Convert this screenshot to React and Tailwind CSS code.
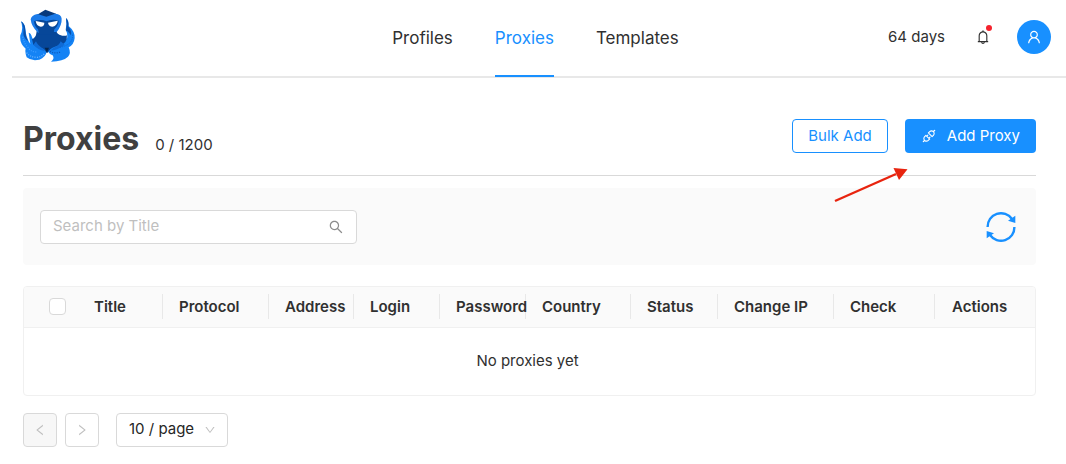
import {
  AiOutlineApi,
  AiOutlineBell,
  AiOutlineDown,
  AiOutlineLeft,
  AiOutlineRight,
  AiOutlineSearch,
  AiOutlineUser,
} from 'react-icons/ai';

const tabs = ['Profiles', 'Proxies', 'Templates'];

const columns = [
  { title: 'Title', width: 'w-[85px]' },
  { title: 'Protocol', width: 'w-[106px]' },
  { title: 'Address', width: 'w-[85px]' },
  { title: 'Login', width: 'w-[86px]' },
  { title: 'Password', width: 'w-[86px]' },
  { title: 'Country', width: 'w-[105px]' },
  { title: 'Status', width: 'w-[87px]' },
  { title: 'Change IP', width: 'w-[116px]' },
  { title: 'Check', width: 'w-[101px]' },
  { title: 'Actions', width: 'w-[100px]' },
];

const OctopusLogo = () => (
  <svg viewBox="60 27 168 162" className="h-[54px] w-14" aria-hidden="true">
    {/* outer tentacles */}
    <path d="M63 64 Q76 72 77 92 Q78 112 91 132 L86 98 Q94 100 96 112 Q99 122 112 128 L141 152 Q137 172 118 179 Q94 184 80 172 Q74 156 77 146 Q58 130 61 106 Q71 86 63 64Z" fill="#1483f5" />
    <path d="M198 54 Q207 62 206 78 Q225 94 224 114 Q222 134 206 142 Q214 160 204 170 Q190 184 153 185 Q165 176 158 166 Q146 162 142 150 L172 126 Q194 130 202 112 Q204 100 197 90 Q201 72 198 54Z" fill="#1483f5" />
    <path d="M63 64 Q76 72 76 92 Q76 108 84 124 Q69 112 70 98 Q73 80 63 64Z" fill="#0a4fa8" />
    <path d="M198 54 Q207 62 205 80 Q216 92 213 106 Q204 92 198 92 Q202 72 198 54Z" fill="#0a4fa8" />
    {/* body */}
    <path d="M112 80 L168 80 Q166 98 178 104 Q194 110 201 106 Q202 130 180 136 Q160 140 151 148 L141 160 L132 148 Q118 142 100 134 L96 118 Q108 112 109 100Z" fill="#074799" />
    <path d="M108 124 Q112 136 132 148 L134 153 Q114 150 100 134Z" fill="#0f6bd6" />
    <path d="M182 124 Q178 136 160 144 L150 152 Q174 150 194 134Z" fill="#0f6bd6" />
    {/* head */}
    <path d="M109 46 L136 29 L168 41 L170 52 L108 52Z" fill="#083a7c" />
    <path d="M92 58 Q94 46 112 42 L139 50 L166 41 Q184 42 185 56 Q186 76 170 96 L164 96 L114 98 Q94 80 92 58Z" fill="#1a7ae8" />
    <path d="M102 64 Q122 56 139 64 Q158 56 176 62 Q176 76 163 88 L160 104 L118 104 L114 88 Q104 80 102 64Z" fill="#074799" />
    <path d="M107 63 L133 68 Q133 80 122 80 Q109 78 107 63Z" fill="#fff" />
    <path d="M144 68 L173 62 Q172 76 158 80 Q146 80 144 68Z" fill="#fff" />
    {/* suckers */}
    <path d="M68 110 Q72 132 84 142 Q92 156 110 156" fill="none" stroke="#3d9bff" strokeWidth="4" strokeDasharray="3 4" />
    <path d="M80 158 Q90 172 112 172 Q126 170 134 160" fill="none" stroke="#6cb4ff" strokeWidth="4" strokeDasharray="3 4" />
    <path d="M218 104 Q218 126 202 134 Q188 142 176 142" fill="none" stroke="#0b62cc" strokeWidth="3" strokeDasharray="3 4" />
    <path d="M150 154 Q164 162 182 156" fill="none" stroke="#0b56b8" strokeWidth="4" strokeDasharray="3 4" />
    <path d="M134 143 L147 143 L141 158Z" fill="#05264f" />
  </svg>
);

const RefreshIcon = () => (
  <svg viewBox="0 0 32 32" className="size-8" fill="none" stroke="#1890ff" strokeWidth="2.4" aria-hidden="true">
    <path d="M2.6 16 A13.4 13.4 0 0 1 27 8" />
    <path d="M29.4 16 A13.4 13.4 0 0 1 5 24" />
    <path d="M30.3 4.8 V12 L23 9.8Z" fill="#1890ff" stroke="none" />
    <path d="M1.7 27.2 V20 L9 22.2Z" fill="#1890ff" stroke="none" />
  </svg>
);

const Header = () => (
  <header className="ml-3 grid h-[78px] grid-cols-[1fr_auto_1fr] border-b-2 border-[#e8e8e8] pr-[15px] pl-2">
    <a href="#home" aria-label="Home" className="self-start pt-[9px]">
      <OctopusLogo />
    </a>
    <nav className="-mb-px flex gap-[42px] text-[17px] leading-6">
      {tabs.map((tab) => (
        <a
          key={tab}
          href={`#${tab.toLowerCase()}`}
          className={
            tab === 'Proxies'
              ? 'border-b-2 border-[#1890ff] pt-[26px] text-[#1890ff]'
              : 'border-b-2 border-transparent pt-[26px]'
          }
        >
          {tab}
        </a>
      ))}
    </nav>
    <div className="flex items-center justify-end pb-0.5">
      <span className="text-[15px]">64 days</span>
      <button type="button" aria-label="Notifications" className="relative ml-[30px]">
        <AiOutlineBell className="size-4" />
        <span className="absolute -top-1 -right-px size-1.5 rounded-full bg-[#f5222d]" />
      </button>
      <button
        type="button"
        aria-label="Account"
        className="ml-[26px] flex size-[34px] items-center justify-center rounded-full bg-[#1890ff] text-white"
      >
        <AiOutlineUser className="size-4" />
      </button>
    </div>
  </header>
);

const PageTitle = () => (
  <div className="flex items-start justify-between border-b border-[#d9d9d9] pt-[41px] pb-[18px]">
    <div className="flex items-baseline gap-4 pt-[3px]">
      <h1 className="text-[32px] leading-[34px] font-bold text-[#404040]">Proxies</h1>
      <span className="text-[15px]">0 / 1200</span>
    </div>
    <div className="flex gap-[17px] text-[15px]">
      <button type="button" className="h-[34px] rounded-[4px] border border-[#1890ff] px-[15px] text-[#1890ff]">
        Bulk Add
      </button>
      <div className="relative">
        <button
          type="button"
          className="flex h-[34px] items-center gap-2.5 rounded-[4px] bg-[#1890ff] px-4 text-white"
        >
          <AiOutlineApi className="size-4" />
          Add Proxy
        </button>
        <svg viewBox="0 0 74 36" className="absolute top-12 -left-[71px] h-9 w-[74px]" aria-hidden="true">
          <path d="M1 34 L62 7" stroke="#e8240f" strokeWidth="2.4" />
          <path d="M73.500 2.200 L59.500 1 L65 13Z" fill="#e8240f" />
        </svg>
      </div>
    </div>
  </div>
);

const Toolbar = () => (
  <div className="mt-3 flex items-center justify-between rounded-[4px] bg-[#fafafa] pt-[22px] pr-[19px] pb-[21px] pl-[17px]">
    <label className="flex h-[34px] w-[317px] items-center rounded-[4px] border border-[#d9d9d9] bg-white px-3">
      <input
        type="text"
        aria-label="Search by Title"
        placeholder="Search by Title"
        className="min-w-0 flex-1 text-[15px] outline-none placeholder:text-[#bfbfbf]"
      />
      <AiOutlineSearch className="size-4 text-[#8c8c8c]" />
    </label>
    <button type="button" aria-label="Refresh">
      <RefreshIcon />
    </button>
  </div>
);

const ProxyTable = () => (
  <div className="mt-[21px] overflow-hidden rounded-[4px] border border-[#f0f0f0]">
    <table className="w-full table-fixed">
      <thead>
        <tr className="h-[41px] border-b border-[#f0f0f0] bg-[#fafafa]">
          <th className="w-[54px] pl-[25px] text-left">
            <input
              type="checkbox"
              aria-label="Select all proxies"
              className="block size-[17px] appearance-none rounded-[4px] border border-[#d9d9d9] bg-white"
            />
          </th>
          {columns.map(({ title, width }, index) => (
            <th key={title} className={`${width} p-0 text-left text-[15px] font-semibold whitespace-nowrap`}>
              <div
                className={
                  index === columns.length - 1
                    ? 'flex h-[25px] items-center pl-[17px]'
                    : 'flex h-[25px] items-center border-r border-[#e8e8e8] pl-4'
                }
              >
                {title}
              </div>
            </th>
          ))}
        </tr>
      </thead>
      <tbody>
        <tr>
          <td colSpan={columns.length + 1} className="h-[67px] pr-1 text-center text-[15px]">
            No proxies yet
          </td>
        </tr>
      </tbody>
    </table>
  </div>
);

const Pagination = () => (
  <div className="flex items-center pt-[17px]">
    <button
      type="button"
      disabled
      aria-label="Previous page"
      className="flex size-[34px] items-center justify-center rounded-[4px] border border-[#d9d9d9] bg-[#f7f7f7] text-[#bfbfbf]"
    >
      <AiOutlineLeft className="size-3.5" />
    </button>
    <button
      type="button"
      aria-label="Next page"
      className="ml-2 flex size-[34px] items-center justify-center rounded-[4px] border border-[#d9d9d9] text-[#bfbfbf]"
    >
      <AiOutlineRight className="size-3.5" />
    </button>
    <div className="relative ml-[17px]">
      <select
        aria-label="Rows per page"
        className="h-[34px] w-28 appearance-none rounded-[4px] border border-[#d9d9d9] bg-white pl-3 text-[15px] text-[#262626]"
      >
        <option>10 / page</option>
        <option>20 / page</option>
        <option>50 / page</option>
      </select>
      <AiOutlineDown className="pointer-events-none absolute top-[11px] right-3 size-3 text-[#bfbfbf]" />
    </div>
  </div>
);

export default function App() {
  return (
    <div className="bg-white font-['Inter','Liberation_Sans',sans-serif] text-[#303030]">
      <Header />
      <main className="pr-[30px] pb-4 pl-[23px]">
        <PageTitle />
        <Toolbar />
        <ProxyTable />
        <Pagination />
      </main>
    </div>
  );
}
